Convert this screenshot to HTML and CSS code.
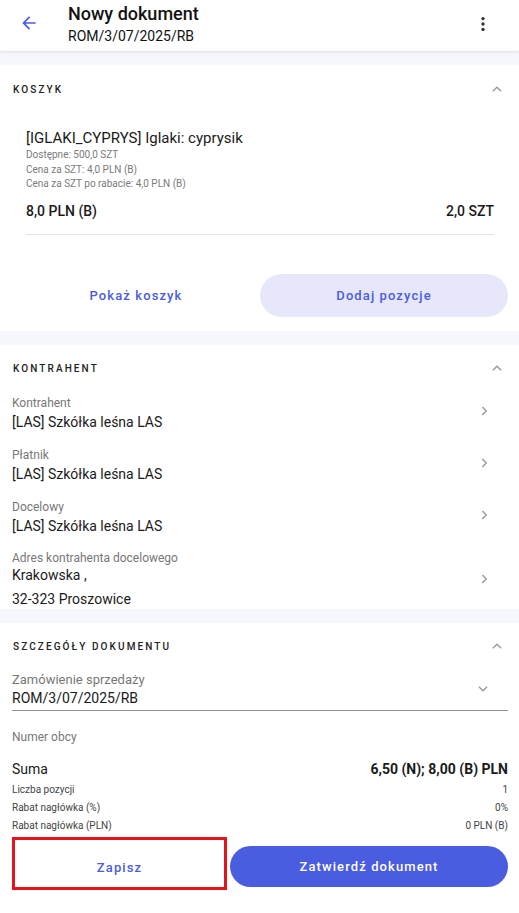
FILE: index.html
```html
<!DOCTYPE html>
<html lang="pl">
<head>
<meta charset="utf-8">
<title>Nowy dokument</title>
<link rel="stylesheet" href="styles.css">
</head>
<body>
<header class="appbar">
  <button class="icon-btn back" aria-label="Wstecz">
    <svg width="20" height="20" viewBox="0 0 24 24"><path d="M20 11H7.83l5.59-5.59L12 4l-8 8 8 8 1.41-1.41L7.83 13H20v-2z" fill="#4a5ce0"/></svg>
  </button>
  <div class="titles">
    <div class="title">Nowy dokument</div>
    <div class="subtitle">ROM/3/07/2025/RB</div>
  </div>
  <button class="icon-btn more" aria-label="Więcej">
    <svg width="20" height="20" viewBox="0 0 24 24"><circle cx="12" cy="5.5" r="2" fill="#333"/><circle cx="12" cy="12" r="2" fill="#333"/><circle cx="12" cy="18.5" r="2" fill="#333"/></svg>
  </button>
</header>

<main class="content">
  <section class="card">
    <div class="card-head">
      <span class="card-title">KOSZYK</span>
      <svg class="chev-up" width="14" height="14" viewBox="0 0 24 24"><path d="M5 16l7-7 7 7" fill="none" stroke="#9a9a9a" stroke-width="2.4"/></svg>
    </div>
    <div class="product">
      <div class="product-name">[IGLAKI_CYPRYS] Iglaki: cyprysik</div>
      <div class="product-meta">Dostępne: 500,0 SZT</div>
      <div class="product-meta">Cena za SZT: 4,0 PLN (B)</div>
      <div class="product-meta">Cena za SZT po rabacie: 4,0 PLN (B)</div>
      <div class="product-total">
        <span>8,0 PLN (B)</span>
        <span>2,0 SZT</span>
      </div>
    </div>
    <div class="actions">
      <button class="btn btn-text">Pokaż koszyk</button>
      <button class="btn btn-tonal">Dodaj pozycje</button>
    </div>
  </section>

  <section class="card card-contractor">
    <div class="card-head">
      <span class="card-title">KONTRAHENT</span>
      <svg class="chev-up" width="14" height="14" viewBox="0 0 24 24"><path d="M5 16l7-7 7 7" fill="none" stroke="#9a9a9a" stroke-width="2.4"/></svg>
    </div>
    <div class="fields">
      <div class="field">
        <div class="field-text">
          <div class="field-label">Kontrahent</div>
          <div class="field-value">[LAS] Szkółka leśna LAS</div>
        </div>
        <svg class="chev-right" width="14" height="14" viewBox="0 0 24 24"><path d="M9 5l7 7-7 7" fill="none" stroke="#9a9a9a" stroke-width="2.4"/></svg>
      </div>
      <div class="field">
        <div class="field-text">
          <div class="field-label">Płatnik</div>
          <div class="field-value">[LAS] Szkółka leśna LAS</div>
        </div>
        <svg class="chev-right" width="14" height="14" viewBox="0 0 24 24"><path d="M9 5l7 7-7 7" fill="none" stroke="#9a9a9a" stroke-width="2.4"/></svg>
      </div>
      <div class="field">
        <div class="field-text">
          <div class="field-label">Docelowy</div>
          <div class="field-value">[LAS] Szkółka leśna LAS</div>
        </div>
        <svg class="chev-right" width="14" height="14" viewBox="0 0 24 24"><path d="M9 5l7 7-7 7" fill="none" stroke="#9a9a9a" stroke-width="2.4"/></svg>
      </div>
      <div class="field field-addr">
        <div class="field-text">
          <div class="field-label">Adres kontrahenta docelowego</div>
          <div class="field-value addr1">Krakowska ,</div>
          <div class="field-value addr2">32-323 Proszowice</div>
        </div>
        <svg class="chev-right" width="14" height="14" viewBox="0 0 24 24"><path d="M9 5l7 7-7 7" fill="none" stroke="#9a9a9a" stroke-width="2.4"/></svg>
      </div>
    </div>
  </section>

  <section class="card card-last">
    <div class="card-head">
      <span class="card-title">SZCZEGÓŁY DOKUMENTU</span>
      <svg class="chev-up" width="14" height="14" viewBox="0 0 24 24"><path d="M5 16l7-7 7 7" fill="none" stroke="#9a9a9a" stroke-width="2.4"/></svg>
    </div>
    <div class="select">
      <div class="field-text">
        <div class="select-label">Zamówienie sprzedaży</div>
        <div class="field-value">ROM/3/07/2025/RB</div>
      </div>
      <svg class="chev-down" width="14" height="14" viewBox="0 0 24 24"><path d="M5 8l7 7 7-7" fill="none" stroke="#9a9a9a" stroke-width="2.4"/></svg>
    </div>
    <div class="foreign">Numer obcy</div>
    <div class="summary">
      <div class="sum-row"><span>Suma</span><strong>6,50 (N); 8,00 (B) PLN</strong></div>
      <div class="small-row"><span>Liczba pozycji</span><span>1</span></div>
      <div class="small-row"><span>Rabat nagłówka (%)</span><span>0%</span></div>
      <div class="small-row"><span>Rabat nagłówka (PLN)</span><span>0 PLN (B)</span></div>
    </div>
    <div class="bottom-actions">
      <button class="btn btn-outline-red">Zapisz</button>
      <button class="btn btn-filled">Zatwierdź dokument</button>
    </div>
  </section>
</main>
</body>
</html>
```

FILE: styles.css
```css
* { box-sizing: border-box; }
html, body { margin: 0; padding: 0; }
body {
  width: 519px;
  height: 913px;
  overflow: hidden;
  font-family: Roboto, "Noto Sans", sans-serif;
  color: #1c1c1c;
  background: #f6f7fc;
}
button { font-family: inherit; border: none; background: none; padding: 0; cursor: pointer; }

.appbar {
  height: 52px;
  background: #fff;
  display: flex;
  align-items: center;
  border-bottom: 1px solid #e6e6ea;
  box-shadow: 0 1px 2px rgba(0,0,0,0.06);
}
.icon-btn { display: flex; align-items: center; justify-content: center; width: 40px; height: 40px; }
.back { margin-left: 9px; margin-top: -6px; }
.titles { margin-left: 19px; flex: 1; }
.title { font-size: 18px; font-weight: 500; line-height: 22px; color: #111; margin-top: -3px; }
.subtitle { font-size: 14px; line-height: 18px; color: #111; margin-top: 2px; }
.more { margin-right: 16px; margin-top: -4px; }

.content { padding-top: 13px; display: flex; flex-direction: column; gap: 14px; }
.card { background: #fff; }

.card-head {
  height: 48px;
  display: flex;
  align-items: center;
  justify-content: space-between;
  padding: 0 15px 0 13px;
}
.card-title { font-size: 10px; font-weight: 500; letter-spacing: 2.1px; color: #222; }
.chev-up { margin-top: -1px; }

.product { padding: 15px 25px 0 26px; }
.product-name { font-size: 15px; line-height: 20px; color: #1a1a1a; }
.product-meta { font-size: 10px; line-height: 14.5px; color: #7a7a7a; }
.product-total {
  display: flex;
  justify-content: space-between;
  font-size: 14px;
  font-weight: 500;
  color: #1a1a1a;
  margin-top: 11px;
  padding-bottom: 15px;
  border-bottom: 1px solid #e4e4e8;
}

.actions { display: flex; padding: 39px 11px 14px 12px; }
.btn {
  height: 43px;
  border-radius: 22px;
  font-size: 13px;
  font-weight: 500;
  letter-spacing: 1.1px;
}
.btn-text { width: 248px; color: #4a5ce0; }
.btn-tonal { width: 248px; background: #e6e7fa; color: #4a5ce0; }

.fields { padding: 0 28px 0 12px; }
.field { display: flex; align-items: center; justify-content: space-between; height: 52px; }
.field:first-child { margin-top: -5px; }
.field .chev-right { margin-bottom: 6px; }
.field-label { font-size: 12px; line-height: 16px; color: #777; }
.field-value { font-size: 14px; line-height: 19px; color: #1a1a1a; margin-top: 2px; }
.field-addr { height: auto; align-items: flex-start; padding-top: 6px; }
.field-addr .chev-right { margin-top: 22px; margin-bottom: 0; }
.addr1 { margin-top: 0; }
.addr2 { margin-top: 5px; }

.select {
  margin: 0 11px 0 12px;
  display: flex;
  align-items: center;
  justify-content: space-between;
  padding-right: 18px;
  padding-bottom: 2px;
  border-bottom: 1.5px solid #8f8f8f;
}
.select-label { font-size: 13px; line-height: 18px; color: #777; }
.select .field-value { margin-top: 0; }
.foreign { padding: 18px 12px 0; font-size: 12px; line-height: 16px; color: #777; }

.summary { padding: 15px 11px 0 12px; }
.sum-row { display: flex; justify-content: space-between; align-items: center; font-size: 14px; line-height: 18px; color: #1a1a1a; }
.sum-row strong { font-weight: 700; }
.small-row { display: flex; justify-content: space-between; font-size: 10px; line-height: 18px; color: #444; }
.small-row:nth-child(2) { margin-top: 3px; }

.bottom-actions { display: flex; align-items: flex-start; gap: 3px; padding: 2px 11px 30px 12px; }
.btn-outline-red {
  width: 215px;
  height: 53px;
  border-radius: 0;
  border: 3px solid #e3141c;
  color: #4a5ce0;
  display: flex;
  align-items: center;
  justify-content: center;
  padding: 10px 0 2px;
}
.btn-filled { width: 278px; height: 41px; background: #4a5ce0; color: #fff; margin-top: 9px; }
```
